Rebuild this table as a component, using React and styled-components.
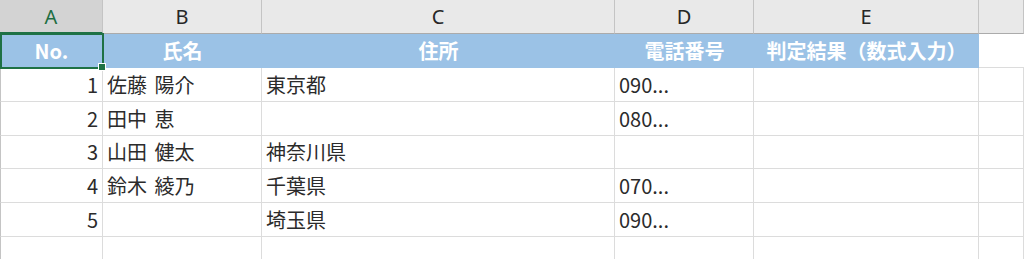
import React from 'react';
import styled, { createGlobalStyle } from 'styled-components';

const GlobalStyle = createGlobalStyle`
  html, body {
    margin: 0;
    padding: 0;
    background: #ffffff;
    overflow: hidden;
  }
  body {
    font-family: "Noto Sans CJK JP", "Noto Sans", sans-serif;
  }
`;

const COLS = '103px 159px 353px 139px 225px 1fr';

const Sheet = styled.div`
  position: relative;
  width: 1024px;
  height: 259px;
  overflow: hidden;
  background: #ffffff;
`;

const HeaderRow = styled.div`
  display: grid;
  grid-template-columns: ${COLS};
  height: 34px;
`;

const ColHead = styled.div`
  display: flex;
  align-items: center;
  justify-content: center;
  box-sizing: border-box;
  background: ${(p) => (p.$active ? '#d3d3d3' : '#e9e9e9')};
  color: ${(p) => (p.$active ? '#1e6e42' : '#262626')};
  border-right: 1px solid #c4c4c4;
  border-bottom: ${(p) => (p.$active ? '2px solid #1e7145' : '1px solid #ababab')};
  font-family: "Noto Sans", "Open Sans", sans-serif;
  font-size: 20px;
  padding-top: ${(p) => (p.$active ? '1px' : '0')};
`;

const Row = styled.div`
  display: grid;
  grid-template-columns: ${COLS};
  height: ${(p) => p.$h}px;
`;

const Cell = styled.div`
  display: flex;
  align-items: center;
  justify-content: ${(p) => (p.$num ? 'flex-end' : 'flex-start')};
  box-sizing: border-box;
  padding: 0 4px 1px 4px;
  border-right: 1px solid #dcdcdc;
  border-bottom: 1px solid #dcdcdc;
  border-left: ${(p) => (p.$first ? '1px solid #c4c4c4' : 'none')};
  color: #2b2b2b;
  font-size: 20px;
  word-spacing: 3px;
  white-space: pre;
  overflow: hidden;
`;

const TitleCell = styled.div`
  display: flex;
  align-items: center;
  justify-content: center;
  box-sizing: border-box;
  background: ${(p) => (p.$blank ? '#ffffff' : '#9bc2e6')};
  border-bottom: 1px solid ${(p) => (p.$blank ? '#dcdcdc' : '#9bc2e6')};
  color: #ffffff;
  font-weight: 700;
  font-size: 20px;
  padding-bottom: 1px;
  white-space: nowrap;
`;

const Selection = styled.div`
  position: absolute;
  left: 0;
  top: 33px;
  width: 104px;
  height: 36px;
  box-sizing: border-box;
  border: 2px solid #1e7145;
  pointer-events: none;
`;

const Handle = styled.div`
  position: absolute;
  left: 98px;
  top: 63px;
  width: 8px;
  height: 8px;
  box-sizing: border-box;
  background: #1e7145;
  border: 1px solid #ffffff;
`;

const letters = ['A', 'B', 'C', 'D', 'E', ''];
const titles = ['No.', '氏名', '住所', '電話番号', '判定結果（数式入力）'];

const rows = [
  ['1', '佐藤 陽介', '東京都', '090...'],
  ['2', '田中 恵', '', '080...'],
  ['3', '山田 健太', '神奈川県', ''],
  ['4', '鈴木 綾乃', '千葉県', '070...'],
  ['5', '', '埼玉県', '090...'],
  ['', '', '', ''],
];

const heights = [34, 34, 33, 34, 34, 34];

export default function App() {
  return (
    <>
      <GlobalStyle />
      <Sheet>
        <HeaderRow>
          {letters.map((l, i) => (
            <ColHead key={i} $active={i === 0}>
              {l}
            </ColHead>
          ))}
        </HeaderRow>
        <Row $h={34}>
          {titles.map((t) => (
            <TitleCell key={t}>{t}</TitleCell>
          ))}
          <TitleCell $blank />
        </Row>
        {rows.map((r, i) => (
          <Row key={i} $h={heights[i]}>
            <Cell $num $first>{r[0]}</Cell>
            <Cell>{r[1]}</Cell>
            <Cell>{r[2]}</Cell>
            <Cell>{r[3]}</Cell>
            <Cell />
            <Cell />
          </Row>
        ))}
        <Selection />
        <Handle />
      </Sheet>
    </>
  );
}
